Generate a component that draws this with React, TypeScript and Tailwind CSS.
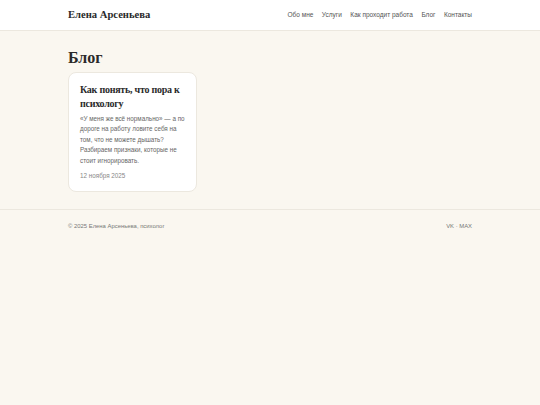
import React from 'react';

const navItems = ['Обо мне', 'Услуги', 'Как проходит работа', 'Блог', 'Контакты'];

const serif = "font-['Liberation_Serif','Times_New_Roman',serif]";
const sans = "font-['Liberation_Sans','Arial',sans-serif]";

export default function App() {
  return (
    <div className={`min-h-[405px] bg-[#faf7f0] flex flex-col ${sans}`}>
      <header className="bg-white border-b border-[#ece8df]">
        <div className="mx-auto w-[404px] h-[30px] flex items-center justify-between">
          <a className={`${serif} font-bold text-[10.6px] text-[#2a2a2a]`}>Елена Арсеньева</a>
          <nav className="flex items-center gap-[8.5px] text-[6.5px] text-[#555]">
            {navItems.map((item) => (
              <a key={item}>{item}</a>
            ))}
          </nav>
        </div>
      </header>

      <main className="mx-auto w-[404px] pt-[17px] pb-[17px]">
        <h1 className={`${serif} font-bold text-[16px] leading-[20px] text-[#2a2a2a]`}>Блог</h1>
        <div className="mt-[4px] w-[129px] bg-white border border-[#ece8df] rounded-[8px] px-[11px] pt-[10px] pb-[10px]">
          <h2 className={`${serif} font-bold text-[10px] leading-[13.5px] tracking-[-0.25px] text-[#2a2a2a]`}>
            Как понять, что пора к психологу
          </h2>
          <p className="mt-[3.5px] text-[6.3px] leading-[10.5px] text-[#666]">
            «У меня же всё нормально» — а по дороге на работу ловите себя на том, что не можете дышать? Разбираем признаки, которые не стоит игнорировать.
          </p>
          <p className="mt-[4.5px] text-[6.3px] leading-[10.5px] text-[#888]">12 ноября 2025</p>
        </div>
      </main>

      <footer className="border-t border-[#ece8df]">
        <div className="mx-auto w-[404px] h-[32px] flex items-center justify-between text-[5.9px] text-[#777]">
          <span>© 2025 Елена Арсеньева, психолог</span>
          <span>VK · MAX</span>
        </div>
      </footer>
    </div>
  );
}
